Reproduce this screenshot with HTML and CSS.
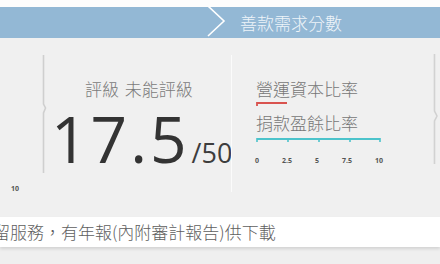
FILE: index.html
```html
<!DOCTYPE html>
<html lang="zh-Hant">
  <head>
    <meta charset="UTF-8" />
    <meta name="viewport" content="width=device-width, initial-scale=1.0" />
    <title>善款需求分數</title>
    <link rel="stylesheet" href="styles.css">
  </head>

  <body>
    <div class="top-strip"></div>

    <div class="band">
      <svg class="chevron" width="22" height="31" viewBox="0 0 22 31">
        <path d="M3 -1 L19 14 L3 29" fill="none" stroke="#ffffff" stroke-width="1.6" />
      </svg>
      <span class="band-title">善款需求分數</span>
    </div>

    <div class="panel">
      <div class="edge">
        <span class="edge-label">10</span>
      </div>

      <svg class="bracket" width="5" height="118" viewBox="0 0 5 118">
        <path d="M1.5 0 V49 L3.5 53 L1.5 58 V118" fill="none" stroke="#cfcfcf" stroke-width="1.6" />
      </svg>

      <div class="score">
        <div class="rating">評級 未能評級</div>
        <div class="points">
          <span class="points-value">17.5</span><span class="points-max">/50</span>
        </div>
      </div>

      <div class="divider"></div>

      <div class="ratios">
        <div class="ratio-name">營運資本比率</div>
        <svg class="ratio-bar" width="40" height="8" viewBox="0 0 40 8">
          <path d="M1 5 V2 H31" fill="none" stroke="#d9534f" stroke-width="1.8" />
        </svg>
        <div class="ratio-name">捐款盈餘比率</div>
        <svg class="axis" width="128" height="10" viewBox="0 0 128 10">
          <path d="M1 2 H124" fill="none" stroke="#4cc3cb" stroke-width="1.8" />
          <path d="M1 1 V5 M32 1 V5 M63 1 V5 M94 1 V5 M124 1 V5" fill="none" stroke="#4cc3cb" stroke-width="1.6" />
        </svg>
        <div class="axis-labels">
          <span>0</span>
          <span>2.5</span>
          <span>5</span>
          <span>7.5</span>
          <span>10</span>
        </div>
      </div>

      <svg class="bracket bracket-right" width="6" height="110" viewBox="0 0 6 110">
        <path d="M1.5 0 V57 L4 62 L1.5 67 V110" fill="none" stroke="#d2d2d2" stroke-width="1.6" />
      </svg>
    </div>

    <div class="note">
      <p class="note-text">留服務，有年報(內附審計報告)供下載</p>
    </div>
    <div class="foot"></div>
  </body>
</html>
```

FILE: styles.css
```css
* {
  box-sizing: border-box;
  margin: 0;
  padding: 0;
}

body {
  width: 440px;
  height: 264px;
  overflow: hidden;
  background: #efefef;
  font-family: "Noto Sans CJK TC", "Open Sans", sans-serif;
}

.top-strip {
  height: 7px;
  background: #fdfdfd;
}

.band {
  display: flex;
  align-items: center;
  height: 31px;
  padding-left: 205px;
  background: #93b8d5;
}

.chevron {
  display: block;
  align-self: flex-start;
}

.band-title {
  margin-left: 13px;
  color: #eef4f9;
  font-size: 17px;
  font-weight: 300;
  line-height: 1;
}

.panel {
  display: flex;
  align-items: flex-start;
  height: 179px;
  background: #f0f0f0;
}

.edge {
  width: 42px;
  padding-top: 147px;
  padding-left: 11px;
  font-size: 7px;
  line-height: 1;
}

.edge-label {
  font-family: "Open Sans", sans-serif;
  font-weight: 700;
  color: #555;
}

.bracket {
  display: block;
  margin-top: 17px;
}

.score {
  width: 184px;
  padding-top: 42px;
}

.rating {
  padding-left: 38px;
  color: #7a7a7a;
  font-size: 17px;
  font-weight: 300;
  line-height: 1;
  word-spacing: 2px;
}

.points {
  margin-top: 10px;
  padding-left: 4px;
  color: #333;
  font-family: "Open Sans", sans-serif;
  white-space: nowrap;
  line-height: 1;
}

.points-value {
  font-size: 64px;
  letter-spacing: 3px;
}

.points-max {
  margin-left: 2px;
  font-size: 27px;
  color: #3d3d3d;
}

.divider {
  width: 1px;
  height: 137px;
  margin-top: 17px;
  background: #fbfbfb;
}

.ratios {
  width: 201px;
  padding-top: 42px;
  padding-left: 24px;
}

.ratio-name {
  color: #777;
  font-size: 17px;
  font-weight: 300;
  line-height: 1;
}

.ratio-bar {
  display: block;
  margin-top: 4px;
  margin-bottom: 5px;
}

.axis {
  display: block;
  margin-top: 6px;
}

.axis-labels {
  display: flex;
  justify-content: space-between;
  width: 128px;
  margin-top: 10px;
  margin-left: -1px;
  color: #555;
  font-family: "Open Sans", sans-serif;
  font-size: 7px;
  font-weight: 700;
  line-height: 1;
}

.bracket-right {
  margin-top: 16px;
}

.note {
  height: 30px;
  background: #fff;
  box-shadow: 0 2px 3px rgba(0, 0, 0, 0.12);
  overflow: hidden;
}

.note-text {
  margin-left: -7px;
  padding-top: 6px;
  color: #5e5e5e;
  font-size: 17px;
  font-weight: 300;
  line-height: 1;
  white-space: nowrap;
}

.foot {
  height: 17px;
}
```
